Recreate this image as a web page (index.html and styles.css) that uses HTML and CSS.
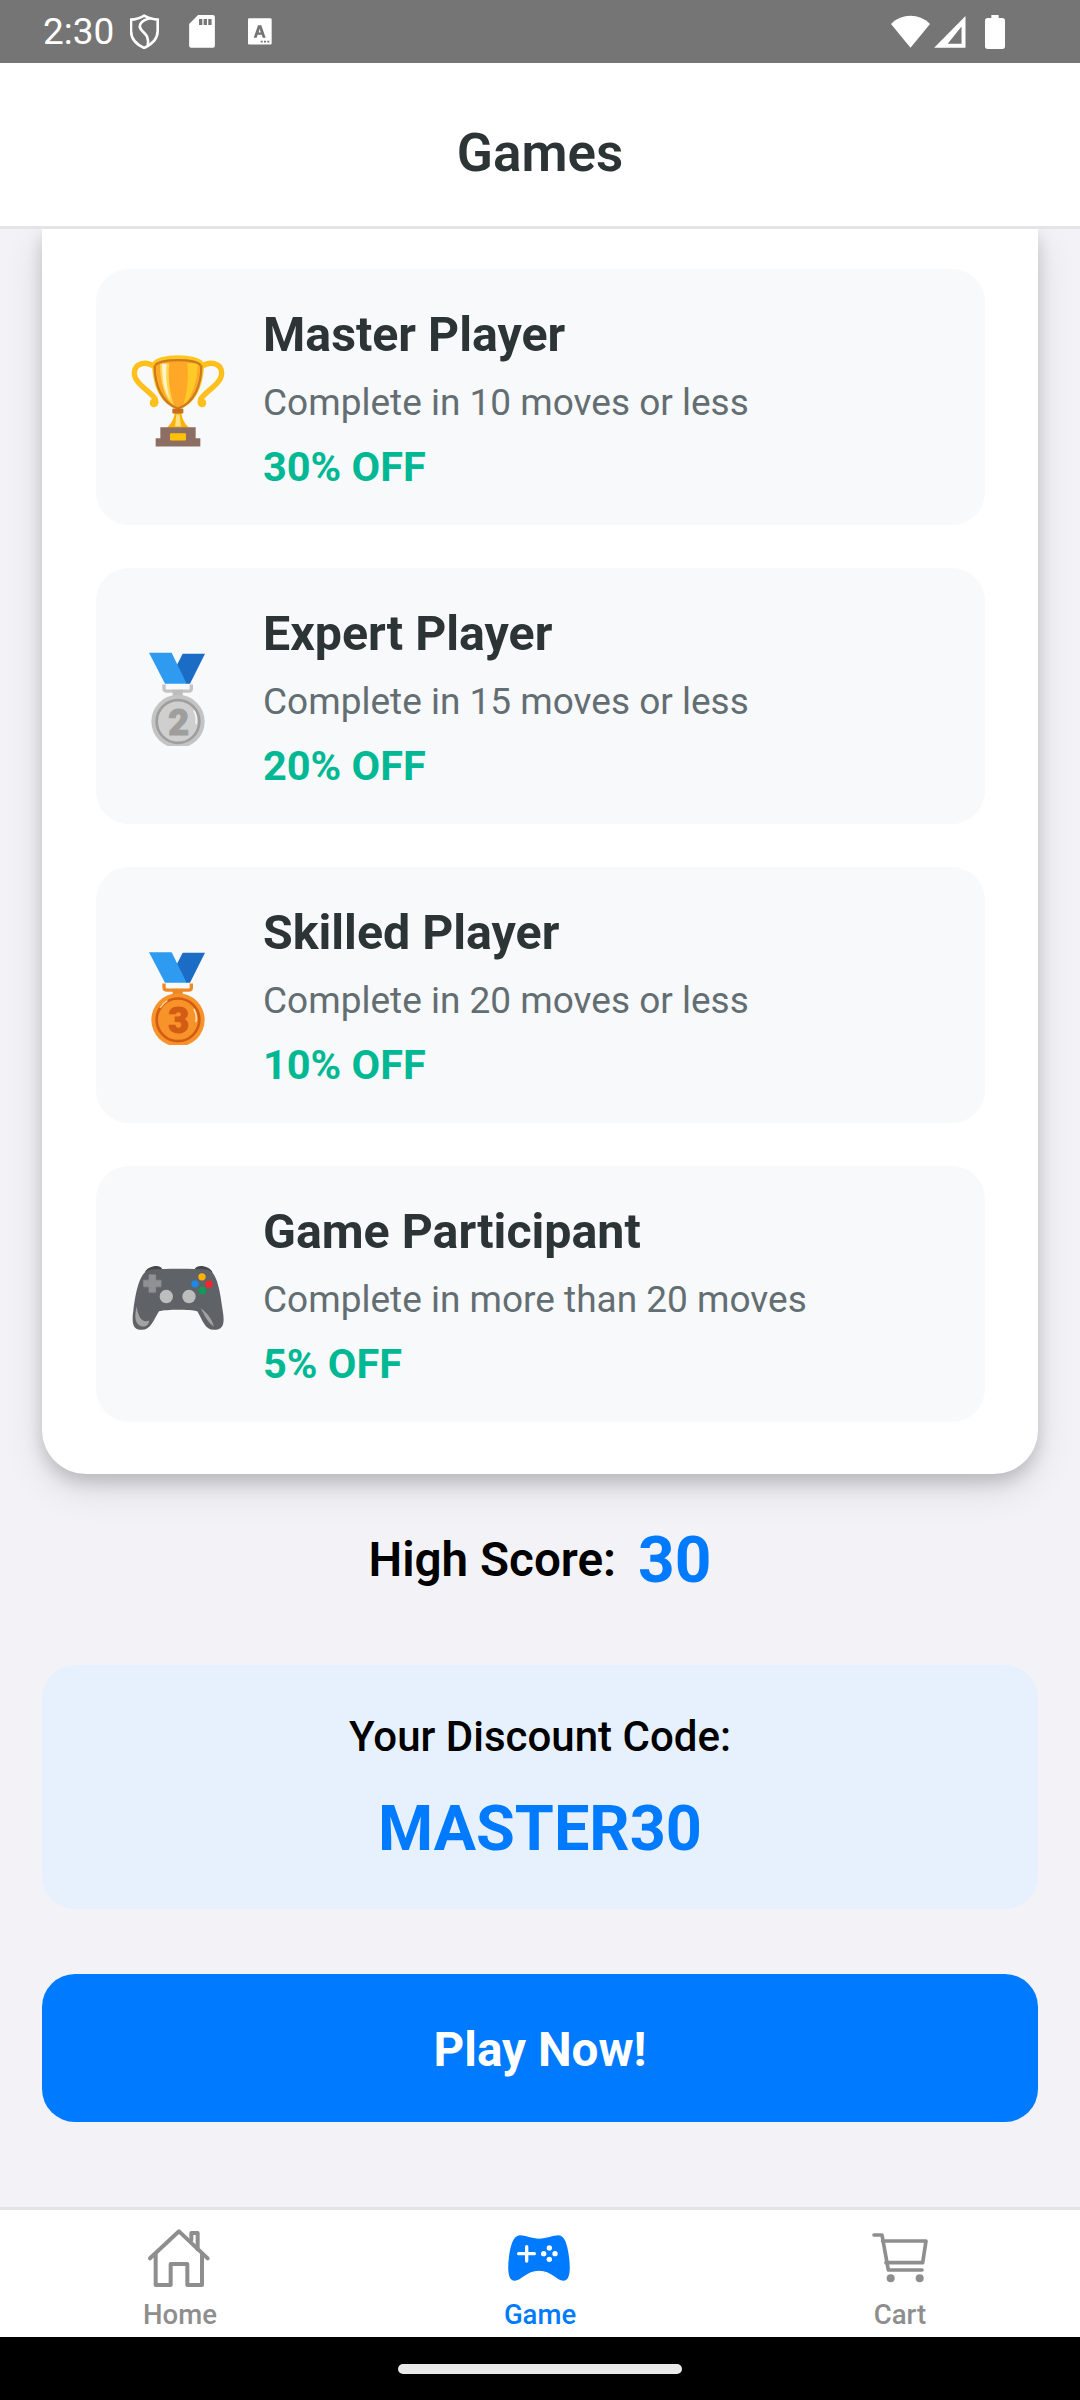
FILE: index.html
```html
<!DOCTYPE html>
<html lang="en">
<head>
<meta charset="utf-8">
<title>Games</title>
<link rel="stylesheet" href="styles.css">
</head>
<body>
<div class="app">
  <div class="status">
    <span class="time">2:30</span>
    <svg class="si shield" viewBox="390 42 88 104"><path d="M433 46 C448 54 462 58 474 58 V92 C474 118 455 134 433 144 C411 134 393 118 393 92 V58 C405 58 420 54 433 46Z" fill="none" stroke="#fff" stroke-width="8"/><path d="M452 54 C425 60 412 74 425 90 C437 103 448 108 444 136" fill="none" stroke="#fff" stroke-width="8"/></svg>
    <svg class="si sd" viewBox="567 45 78 100"><path d="M594 45 H639 Q645 45 645 51 V138 Q645 144 639 144 H573 Q567 144 567 138 V72Z" fill="#fff"/><path d="M597 57h10v18h-10zM611 57h10v18h-10zM625 57h10v18h-10z" fill="#757575"/></svg>
    <svg class="si aa" viewBox="745 55 72 80"><rect x="745" y="55" width="71" height="79" rx="4" fill="#fff"/><path d="M762 114 L775 76 H785 L798 114 H789 L786 105 H774 L771 114Z M777 98 H783 L780 87Z" fill="#757575" fill-rule="evenodd"/><path d="M783 123h6v5h-6zM793 123h6v5h-6zM803 123h6v5h-6z" fill="#757575"/></svg>
    <span class="spacer"></span>
    <svg class="si wifi" viewBox="272 42 118 98"><path d="M272 68 C305 35 357 35 390 68 L331 140Z" fill="#fff"/></svg>
    <svg class="si signal" viewBox="402 44 96 97"><path d="M497 44 V140 H402Z M485 76 L443 128 H485Z" fill="#fff" fill-rule="evenodd"/></svg>
    <svg class="si batt" viewBox="555 42 60 102"><path d="M574 42 H596 V51 H607 Q615 51 615 59 V136 Q615 144 607 144 H563 Q555 144 555 136 V59 Q555 51 563 51 H574Z" fill="#fff"/></svg>
  </div>

  <header class="topbar"><h1>Games</h1></header>

  <main class="scroll">
    <section class="card">
      <article class="reward">
        <svg class="emoji" viewBox="147 82.5 297 297">
          <g fill="none" stroke="#FFC01E" stroke-width="16" stroke-linecap="round">
            <path d="M224 138 C196 120 163 128 163 158 C163 190 212 212 226 236 C232 256 214 256 218 244"/>
            <path d="M364 138 C392 120 425 128 425 158 C425 190 376 212 362 236 C356 256 374 256 370 244"/>
          </g>
          <path d="M284 275 H304 C306 300 318 312 328 322 H260 C270 312 282 300 284 275Z" fill="#FFB300"/>
          <path d="M289 282 H299 L303 318 H285Z" fill="#FFE082"/>
          <path d="M216 128 C228 96 360 96 372 128 C372 195 345 255 294 266 C243 255 216 195 216 128Z" fill="#FFC61E"/>
          <path d="M228 130 C240 118 348 118 360 130 C358 195 340 245 294 262 C248 245 230 195 228 130Z" fill="#FFA726"/>
          <path d="M240 130 L268 128 C262 180 272 225 282 255 C255 235 240 190 240 130Z" fill="#FFD54F"/>
          <path d="M246 130 H260 C256 175 262 210 270 238 C254 215 246 180 246 130Z" fill="#FFF3CD"/>
          <path d="M322 128 H354 C352 185 335 235 308 256 C322 220 326 175 322 128Z" fill="#FFCA28"/>
          <g fill="none" stroke="#CC7A1F" stroke-width="7">
            <path d="M226 134 C245 114 343 114 362 134"/>
            <path d="M224 134 C224 195 246 248 294 264 C342 248 364 195 364 134"/>
          </g>
          <rect x="277" y="264" width="33" height="15" rx="3" fill="#C5711A"/>
          <path d="M241 320 H347 V353 H361 V378 H227 V353 H241Z" fill="#8D6E63"/>
          <rect x="270" y="338" width="48" height="22" rx="3" fill="#FFC107"/>
        </svg>
        <div class="reward-body">
          <h2>Master Player</h2>
          <p class="desc">Complete in 10 moves or less</p>
          <p class="off">30% OFF</p>
        </div>
      </article>

      <article class="reward">
        <svg class="emoji" viewBox="57 79.5 297 297">
          <path d="M218 100 H285 L240 190 H228 L200 135Z" fill="#1A6CC4"/>
          <path d="M117 97 H185 L230 190 H165Z" fill="#2F9BF0"/>
          <path d="M162 192 V204 Q162 212 172 212 H236 Q244 212 244 204 V192" fill="none" stroke="#C4C4C4" stroke-width="10"/>
          <rect x="188" y="208" width="30" height="18" fill="#BDBDBD"/>
          <circle cx="204" cy="303" r="80" fill="#C4C4C4"/>
          <circle cx="204" cy="303" r="64" fill="#CFCFCF" stroke="#9E9E9E" stroke-width="8"/>
          <path d="M252 270 A64 64 0 0 1 258 310" fill="none" stroke="#F2F2F2" stroke-width="5"/>
          <text class="medal-num silver-num" x="206" y="342" text-anchor="middle">2</text>
        </svg>
        <div class="reward-body">
          <h2>Expert Player</h2>
          <p class="desc">Complete in 15 moves or less</p>
          <p class="off">20% OFF</p>
        </div>
      </article>

      <article class="reward">
        <svg class="emoji" viewBox="57 76.5 297 297">
          <path d="M218 97 H285 L240 187 H228 L200 132Z" fill="#1A6CC4"/>
          <path d="M117 95 H185 L230 187 H165Z" fill="#2F9BF0"/>
          <path d="M162 189 V201 Q162 209 172 209 H236 Q244 209 244 201 V189" fill="none" stroke="#EE8A23" stroke-width="10"/>
          <rect x="188" y="205" width="30" height="18" fill="#EE8A23"/>
          <circle cx="204" cy="298" r="80" fill="#F79329"/>
          <circle cx="204" cy="298" r="64" fill="#F79329" stroke="#D25C14" stroke-width="8"/>
          <path d="M252 265 A64 64 0 0 1 258 305" fill="none" stroke="#FFE0B2" stroke-width="5"/>
          <path d="M150 262 A70 70 0 0 1 172 240" fill="none" stroke="#FFCC80" stroke-width="5"/>
          <text class="medal-num bronze-num" x="206" y="337" text-anchor="middle">3</text>
        </svg>
        <div class="reward-body">
          <h2>Skilled Player</h2>
          <p class="desc">Complete in 20 moves or less</p>
          <p class="off">10% OFF</p>
        </div>
      </article>

      <article class="reward">
        <svg class="emoji" viewBox="57 13.5 297 297">
          <path d="M105 95 C110 78 150 68 156 85 L156 100 H105Z M255 85 C262 68 302 78 307 95 V100 H255Z" fill="#44484D"/>
          <path d="M120 88 C145 84 270 84 292 88 C316 92 328 130 338 210 C345 250 340 268 312 268 C285 268 278 240 262 212 C240 206 170 206 147 212 C130 240 122 268 95 268 C70 268 64 250 70 210 C80 130 95 92 120 88Z" fill="#5F6368"/>
          <path d="M117 103 H137 V119 H153 V139 H137 V155 H117 V139 H101 V119 H117Z" fill="#8F9194" stroke="#8F9194" stroke-width="2" stroke-linejoin="round"/>
          <circle cx="169" cy="168" r="20" fill="#BDBDBD"/>
          <circle cx="237" cy="168" r="20" fill="#BDBDBD"/>
          <circle cx="276" cy="109" r="11" fill="#FFB300"/>
          <circle cx="297" cy="131" r="11" fill="#F4262B"/>
          <circle cx="255" cy="130" r="11" fill="#1E88E5"/>
          <circle cx="277" cy="150" r="11" fill="#0F9D58"/>
          <path d="M80 198 C74 225 72 250 95 258 C110 260 118 250 117 240 C100 248 85 235 80 198Z" fill="#A3A3A3"/>
          <path d="M272 203 C285 225 292 245 312 258 C305 235 295 220 272 203Z" fill="#A3A3A3"/>
        </svg>
        <div class="reward-body">
          <h2>Game Participant</h2>
          <p class="desc">Complete in more than 20 moves</p>
          <p class="off">5% OFF</p>
        </div>
      </article>
    </section>

    <div class="score">
      <span class="score-label">High Score:</span>
      <span class="score-value">30</span>
    </div>

    <section class="code">
      <p class="code-label">Your Discount Code:</p>
      <p class="code-value">MASTER30</p>
    </section>

    <button class="play" type="button">Play Now!</button>
  </main>

  <nav class="tabs">
    <div class="tab">
      <svg class="tab-icon" viewBox="141 105 198 198"><g fill="none" stroke="#8E8E8E" stroke-width="12" stroke-linecap="round" stroke-linejoin="round"><path d="M150 205 L237 124 L323 205"/><path d="M274 150 V129 H293 V178"/><path d="M167 192 V285 H212 V222 H262 V285 H306 V192"/></g></svg>
      <span class="tab-label">Home</span>
    </div>
    <div class="tab tab-on">
      <svg class="tab-icon" viewBox="141 105 198 198"><path d="M180 136 C195 136 215 146 237 146 C259 146 280 136 295 136 C315 136 322 165 327 200 C332 240 330 272 310 272 C290 272 275 242 237 242 C199 242 184 272 164 272 C144 272 142 240 147 200 C152 165 160 136 180 136Z" fill="#007AFF"/><path d="M200 170 V213 M176 191 H223" stroke="#fff" stroke-width="10" stroke-linecap="round"/><g fill="#fff"><circle cx="268" cy="174" r="8"/><circle cx="268" cy="208" r="8"/><circle cx="251" cy="191" r="8"/><circle cx="285" cy="191" r="8"/></g></svg>
      <span class="tab-label">Game</span>
    </div>
    <div class="tab">
      <svg class="tab-icon" viewBox="1215 105 198 198"><g fill="none" stroke="#8E8E8E" stroke-width="11" stroke-linecap="round" stroke-linejoin="round"><path d="M1236 135 H1260 L1279 240 H1380"/><path d="M1262 153 H1392 L1382 218 H1272"/></g><circle cx="1286" cy="265" r="12" fill="#8E8E8E"/><circle cx="1373" cy="265" r="12" fill="#8E8E8E"/></svg>
      <span class="tab-label">Cart</span>
    </div>
  </nav>

  <div class="navbar"><span class="pill"></span></div>
</div>
</body>
</html>
```
FILE: styles.css
```css
* { box-sizing: border-box; }
html, body { margin: 0; padding: 0; }
body { font-family: Roboto, "Liberation Sans", sans-serif; background: #F2F2F7; }
h1, h2, p { margin: 0; }

.app { width: 1080px; height: 2400px; display: flex; flex-direction: column; overflow: hidden; }

.status { height: 63px; flex: none; background: #757575; display: flex; align-items: center; padding: 0 75px 0 43px; color: #fff; }
.time { font-size: 37px; line-height: 63px; width: 70px; }
.si { display: block; flex: none; }
.shield { width: 29px; height: 35px; margin-left: 17px; }
.sd { width: 26px; height: 33px; margin-left: 30px; }
.aa { width: 24px; height: 27px; margin-left: 33px; }
.spacer { flex: 1; }
.wifi { width: 39px; height: 33px; }
.signal { width: 32px; height: 32px; margin-left: 4px; }
.batt { width: 20px; height: 34px; margin-left: 19px; }

.topbar { height: 166px; flex: none; background: #fff; border-bottom: 3px solid #E4E4E6; display: flex; align-items: center; justify-content: center; padding-top: 16px; }
.topbar h1 { font-size: 53px; font-weight: 600; color: #2D3436; }

.scroll { flex: 1; min-height: 0; overflow: hidden; padding: 0 42px; display: flex; flex-direction: column; }

.card { flex: none; background: #fff; border-radius: 0 0 44px 44px; padding: 40px 53px 52px 54px; display: flex; flex-direction: column; gap: 43px; box-shadow: 0 8px 16px rgba(0,0,0,.15), 0 14px 38px rgba(0,0,0,.12); }
.reward { height: 256px; background: #F8F9FA; border-radius: 33px; display: flex; align-items: center; padding-left: 33px; }
.emoji { width: 99px; height: 99px; flex: none; }
.reward-body { margin-left: 35px; padding-top: 3px; }
.reward h2 { font-size: 48.3px; line-height: 64px; font-weight: 700; color: #2D3436; }
.desc { font-size: 37px; line-height: 50px; color: #636E72; margin-top: 11px; }
.off { font-size: 41.5px; line-height: 54px; font-weight: 700; color: #00B894; margin-top: 12px; }
.medal-num { font-family: Roboto, "Liberation Sans", sans-serif; font-weight: 900; font-size: 108px; stroke-width: 3px; }
.silver-num { fill: #9E9E9E; stroke: #9E9E9E; }
.bronze-num { fill: #D25C14; stroke: #D25C14; }

.score { flex: none; height: 90px; margin-top: 41px; display: flex; align-items: center; justify-content: center; gap: 22px; }
.score-label { font-size: 47.6px; font-weight: 600; color: #000; }
.score-value { font-size: 64px; font-weight: 700; color: #007AFF; }

.code { flex: none; height: 244px; margin-top: 60px; background: #E7F1FE; border-radius: 33px; display: flex; flex-direction: column; align-items: center; padding-top: 42px; }
.code-label { font-size: 42px; line-height: 60px; font-weight: 500; color: #000; }
.code-value { font-size: 63px; line-height: 80px; font-weight: 700; color: #007AFF; margin-top: 22px; }

.play { flex: none; height: 148px; margin-top: 65px; padding: 3px 0 0; background: #007AFF; border: 0; border-radius: 33px; color: #fff; font-family: inherit; font-size: 47.7px; font-weight: 700; }

.tabs { flex: none; height: 130px; background: #fff; border-top: 3px solid #E4E4E6; display: flex; }
.tab { flex: 1; display: flex; flex-direction: column; align-items: center; padding-top: 15px; color: #8E8E8E; }
.tab-on { color: #007AFF; }
.tab-icon { width: 66px; height: 66px; display: block; flex: none; }
.tab-label { font-size: 27.5px; line-height: 32px; font-weight: 500; margin-top: 8px; }

.navbar { flex: none; height: 63px; background: #000; display: flex; justify-content: center; padding-top: 27px; }
.pill { width: 284px; height: 10px; border-radius: 5px; background: #EAEAEA; }
```
